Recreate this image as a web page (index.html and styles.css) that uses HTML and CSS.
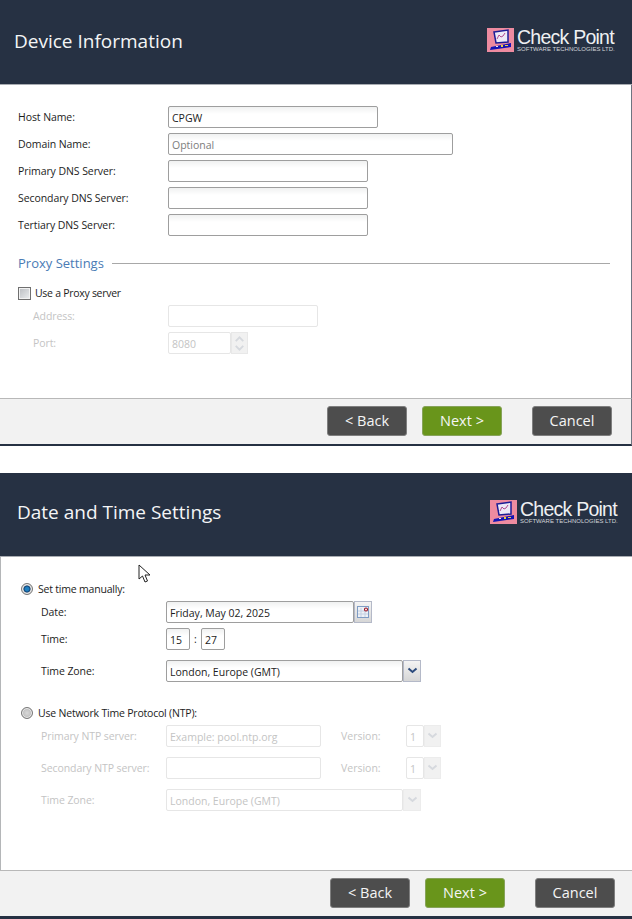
FILE: index.html
```html
<!DOCTYPE html>
<html lang="en">
<head>
<meta charset="utf-8">
<title>Device Setup</title>
<link rel="stylesheet" href="styles.css">
</head>
<body>
<section class="panel panel-device">
  <header class="head">
    <h1>Device Information</h1>
    <div class="logo">
      <svg class="logo-mark" viewBox="0 0 27 24" width="27" height="24"><rect width="27" height="24" fill="#ee8ba0"/><path d="M7 4l14-2v12l-12 1z" fill="#ece8f6" stroke="#1c1c96" stroke-width="1.500"/><path d="M10 11l2-4 2 2 2-1 2-3" fill="none" stroke="#b04a90"/><path d="M3 22l1-3 20-4 0 4z" fill="#1414b4"/><rect x="9" y="18" width="2" height="1" fill="#e8e8f0"/><rect x="14" y="17" width="2" height="2" fill="#e8d040"/><rect x="18" y="17" width="3" height="1" fill="#e8d040"/></svg>
      <div class="logo-text"><div class="logo-name">Check Point</div><div class="logo-sub">SOFTWARE TECHNOLOGIES LTD.</div></div>
    </div>
  </header>
  <div class="body">
    <div class="rows">
      <div class="row"><label class="lbl">Host Name:</label><div class="field w210">CPGW</div></div>
      <div class="row"><label class="lbl">Domain Name:</label><div class="field w285 hint">Optional</div></div>
      <div class="row"><label class="lbl">Primary DNS Server:</label><div class="field w200"></div></div>
      <div class="row"><label class="lbl">Secondary DNS Server:</label><div class="field w200"></div></div>
      <div class="row"><label class="lbl">Tertiary DNS Server:</label><div class="field w200"></div></div>
    </div>
    <div class="legend"><span>Proxy Settings</span><i></i></div>
    <div class="check-line"><span class="checkbox"></span><span>Use a Proxy server</span></div>
    <div class="rows off">
      <div class="row"><label class="lbl sub">Address:</label><div class="field w150"></div></div>
      <div class="row"><label class="lbl sub">Port:</label><div class="field w63">8080</div><div class="spin"><svg width="16" height="20" viewBox="0 0 16 20"><path d="M4 8l4-4 4 4M4 13l4 4 4-4" fill="none" stroke="#d6d9de" stroke-width="2"/></svg></div></div>
    </div>
  </div>
  <footer class="foot">
    <button class="btn">&lt; Back</button><button class="btn next">Next &gt;</button><button class="btn cancel">Cancel</button>
  </footer>
</section>

<section class="panel panel-time">
  <header class="head">
    <h1>Date and Time Settings</h1>
    <div class="logo">
      <svg class="logo-mark" viewBox="0 0 27 24" width="27" height="24"><rect width="27" height="24" fill="#ee8ba0"/><path d="M7 4l14-2v12l-12 1z" fill="#ece8f6" stroke="#1c1c96" stroke-width="1.500"/><path d="M10 11l2-4 2 2 2-1 2-3" fill="none" stroke="#b04a90"/><path d="M3 22l1-3 20-4 0 4z" fill="#1414b4"/><rect x="9" y="18" width="2" height="1" fill="#e8e8f0"/><rect x="14" y="17" width="2" height="2" fill="#e8d040"/><rect x="18" y="17" width="3" height="1" fill="#e8d040"/></svg>
      <div class="logo-text"><div class="logo-name">Check Point</div><div class="logo-sub">SOFTWARE TECHNOLOGIES LTD.</div></div>
    </div>
  </header>
  <div class="body">
    <svg class="cursor" width="13" height="19" viewBox="0 0 13 19"><path d="M1 1v14l3.500-3 2.500 6 2.500-1-2.500-6H12z" fill="#fff" stroke="#222"/></svg>
    <div class="radio-line"><span class="radio on"></span><span>Set time manually:</span></div>
    <div class="trow first"><label class="lbl">Date:</label><div class="field w188">Friday, May 02, 2025</div><div class="pick"><svg width="13" height="13" viewBox="0 0 13 13"><rect x=".5" y=".5" width="11" height="11" fill="#eef1f6" stroke="#7f9cc4"/><path d="M1 5h10M1 8h10M4 2v9M8 2v9" stroke="#c3d0e2"/><circle cx="9" cy="3.500" r="1.500" fill="#fff" stroke="#9a1020" stroke-width="1.100"/></svg></div></div>
    <div class="trow"><label class="lbl">Time:</label><div class="field w24">15</div><span class="colon">:</span><div class="field w24">27</div></div>
    <div class="trow tz"><label class="lbl">Time Zone:</label><div class="field w237">London, Europe (GMT)</div><div class="pick"><svg width="11" height="8" viewBox="0 0 11 8"><path d="M1.500 1.500l4 3.500 4-3.500" fill="none" stroke="#2b4a7c" stroke-width="2"/></svg></div></div>
    <div class="radio-line ntp"><span class="radio"></span><span>Use Network Time Protocol (NTP):</span></div>
    <div class="off">
      <div class="nrow"><label class="lbl">Primary NTP server:</label><div class="field w155 hint">Example: pool.ntp.org</div><label class="ver">Version:</label><div class="field w18">1</div><div class="pick narrow"><svg width="11" height="8" viewBox="0 0 11 8"><path d="M1.500 1.500l4 3.500 4-3.500" fill="none" stroke="#d6d9de" stroke-width="2"/></svg></div></div>
      <div class="nrow"><label class="lbl">Secondary NTP server:</label><div class="field w155"></div><label class="ver">Version:</label><div class="field w18">1</div><div class="pick narrow"><svg width="11" height="8" viewBox="0 0 11 8"><path d="M1.500 1.500l4 3.500 4-3.500" fill="none" stroke="#d6d9de" stroke-width="2"/></svg></div></div>
      <div class="nrow"><label class="lbl">Time Zone:</label><div class="field w237">London, Europe (GMT)</div><div class="pick"><svg width="11" height="8" viewBox="0 0 11 8"><path d="M1.500 1.500l4 3.500 4-3.500" fill="none" stroke="#d6d9de" stroke-width="2"/></svg></div></div>
    </div>
  </div>
  <footer class="foot">
    <button class="btn">&lt; Back</button><button class="btn next">Next &gt;</button><button class="btn cancel">Cancel</button>
  </footer>
</section>
</body>
</html>
```
FILE: styles.css
```css
* { box-sizing: border-box; }
html, body { margin: 0; padding: 0; background: #fff; }
body { width: 632px; height: 919px; overflow: hidden; font-family: "Open Sans", "Noto Sans", sans-serif; font-size: 10.500px; color: #1c1c1c; }
.panel { width: 632px; }
.head { height: 85px; background: #263143; display: flex; align-items: center; justify-content: space-between; border-bottom: 1px solid #a8acb2; }
.head h1 { margin: 0; font-size: 19px; font-weight: 400; color: #f4f5f6; }
.logo { display: flex; align-items: flex-start; gap: 3px; color: #eef0f2; align-self: flex-start; }
.logo-mark { display: block; }
.logo-text { width: 97px; font-family: "Liberation Sans", Arial, sans-serif; }
.logo-name { font-size: 19.500px; line-height: 18px; letter-spacing: -.75px; white-space: nowrap; }
.logo-sub { font-size: 6px; line-height: 7px; letter-spacing: .02px; color: #d2d5da; white-space: nowrap; }
.panel-device .head { padding: 0 18px 3px 14px; }
.panel-device .logo { margin-top: 28px; }
.panel-device .body { height: 313px; padding: 21px 0 0 18px; border-right: 1px solid #6e7480; }
.panel-time { margin-top: 27px; }
.panel-time .head { height: 84px; padding: 0 15px 5px 17px; }
.panel-time .logo { margin-top: 27px; }
.panel-time .body { position: relative; height: 313px; padding: 25px 0 0 20px; border-left: 1px solid #b4b6b8; }
.rows { display: flex; flex-direction: column; gap: 5px; }
.row { display: flex; align-items: center; height: 22px; }
.lbl { display: block; width: 150px; flex: none; white-space: nowrap; letter-spacing: -.08px; }
.lbl.sub { padding-left: 15px; }
.field { height: 22px; flex: none; padding: 1px 3px 0; line-height: 20px; font-size: 10.500px; border: 1px solid #9e9e9e; border-radius: 2px; background: linear-gradient(#f0f1f1, #fff 35%); white-space: nowrap; overflow: hidden; }
.hint { color: #7d7d7d; }
.w210 { width: 210px; }
.w285 { width: 285px; }
.w200 { width: 200px; }
.w150 { width: 150px; }
.w63 { width: 63px; }
.w188 { width: 188px; }
.w24 { width: 24px; }
.w237 { width: 237px; }
.w155 { width: 155px; }
.w18 { width: 18px; }
.legend { display: flex; align-items: center; gap: 8px; margin-top: 17px; padding-right: 21px; color: #4a7bb5; font-size: 13px; height: 20px; }
.legend i { flex: 1; height: 1px; background: #a8a8a8; }
.check-line { display: flex; align-items: center; gap: 4px; margin-top: 13px; height: 14px; letter-spacing: -.28px; }
.checkbox { width: 13px; height: 13px; border: 1px solid #6f6f6f; background: linear-gradient(135deg, #b9bcc0, #eceef0); box-shadow: inset 0 0 0 1px #f2f2f2; }
.off { color: #c4c4c4; }
.rows.off { margin-top: 5px; }
.off .field { border-color: #e6e6e6; color: #c4c4c4; background: #fff; }
.spin { width: 17px; height: 22px; background: #f1f1f1; border: 1px solid #e8e8e8; display: flex; align-items: center; justify-content: center; }
.foot { height: 49px; background: #f2f2f2; border-top: 1px solid #b8b8b8; border-bottom: 3px solid #263143; display: flex; padding-top: 7px; }
.panel-device .foot { padding-left: 327px; border-bottom-width: 2px; height: 48px; border-right: 1px solid #6e7480; }
.panel-time .foot { padding-left: 330px; }
.btn { width: 80px; height: 30px; padding: 0 0 2px; border: 1px solid #7f7f7f; border-radius: 3px; background: #4d4d4d; color: #f5f5f5; font-family: inherit; font-size: 14.500px; }
.btn.next { margin-left: 15px; background: #69951b; border-color: #87a35a; }
.btn.cancel { margin-left: 30px; }
.radio-line { display: flex; align-items: center; gap: 5px; height: 14px; letter-spacing: -.2px; }
.radio { width: 12px; height: 12px; border-radius: 50%; border: 1px solid #777; background: radial-gradient(#d8d8d8, #b0b0b0); box-shadow: inset 0 0 0 1px #eee; }
.radio.on { background: radial-gradient(#1f7fc0 25%, #103f70 45%, #cfcfcf 55%, #a8a8a8); }
.trow { display: flex; align-items: center; height: 22px; margin-top: 5px; padding-left: 20px; }
.trow .lbl, .nrow .lbl { width: 125px; }
.trow.tz { margin-top: 10px; }
.colon { width: 11px; text-align: center; }
.pick { width: 18px; height: 22px; flex: none; background: linear-gradient(#f4f4f4, #d6d6d6); border: 1px solid #b4b9c8; display: flex; align-items: center; justify-content: center; }
.pick.narrow { width: 17px; }
.radio-line.ntp { margin-top: 24px; }
.nrow { display: flex; align-items: center; height: 22px; margin-top: 10px; padding-left: 20px; }
.radio-line.ntp + .off .nrow:first-child { margin-top: 5px; }
.ver { width: 85px; padding-left: 20px; flex: none; }
.off .pick { background: #f1f1f1; border-color: #ececec; }
.cursor { position: absolute; left: 137px; top: 7px; }
```
